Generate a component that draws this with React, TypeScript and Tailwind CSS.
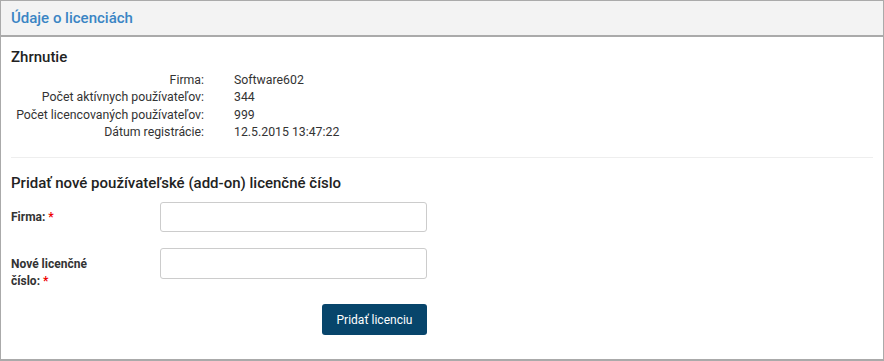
export default function App() {
  const summary = [
    ["Firma:", "Software602"],
    ["Počet aktívnych používateľov:", "344"],
    ["Počet licencovaných používateľov:", "999"],
    ["Dátum registrácie:", "12.5.2015 13:47:22"],
  ];

  return (
    <div className="h-[361px] w-[884px] bg-white font-['Roboto',sans-serif] text-[#333]">
      <div className="flex h-[361px] flex-col border border-[#aaa] border-b-2">
        <div className="flex h-[36px] items-center border-b-2 border-[#aaa] bg-[#f3f3f3] px-[10px]">
          <h1 className="text-[15px] font-medium text-[#3a85c4]">Údaje o licenciách</h1>
        </div>

        <div className="flex flex-col px-[10px]">
          <h2 className="mt-[9px] text-[15px] font-medium text-[#222]">Zhrnutie</h2>
          <div className="mt-[3px] grid grid-cols-[193px_1fr] gap-x-[30px] text-[12.3px] leading-[17.5px] text-[#333]">
            {summary.map(([k, v]) => (
              <div key={k} className="contents">
                <span className="text-right">{k}</span>
                <span>{v}</span>
              </div>
            ))}
          </div>

          <div className="mt-[15px] h-px bg-[#eee]" />

          <h2 className="mt-[14px] text-[15px] font-medium text-[#222]">
            Pridať nové používateľské (add-on) licenčné číslo
          </h2>

          <div className="mt-[8px] flex flex-col">
            <div className="flex items-center">
              <label className="w-[149px] text-[12px] font-bold text-[#333]">
                Firma: <span className="text-[#e00]">*</span>
              </label>
              <input className="h-[30px] w-[267px] rounded-[3px] border border-[#ccc] bg-white" />
            </div>
            <div className="mt-[16px] flex items-start">
              <label className="w-[149px] pt-[8px] text-[12px] font-bold leading-[17px] text-[#333]">
                Nové licenčné
                <br />
                číslo: <span className="text-[#e00]">*</span>
              </label>
              <input className="h-[31px] w-[267px] rounded-[3px] border border-[#ccc] bg-white" />
            </div>
            <div className="mt-[14px] flex w-[416px] justify-end">
              <button className="h-[31px] w-[105px] rounded-[3px] bg-[#07456b] text-[12px] text-white">
                Pridať licenciu
              </button>
            </div>
          </div>
        </div>
      </div>
    </div>
  );
}
